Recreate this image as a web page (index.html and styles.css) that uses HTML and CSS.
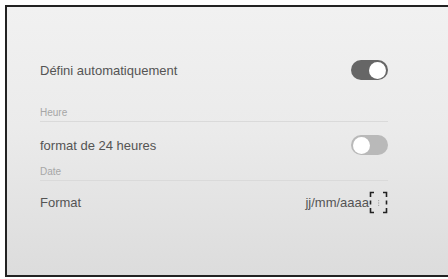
FILE: index.html
```html
<!DOCTYPE html>
<html>
<head>
<meta charset="utf-8">
<link rel="stylesheet" href="styles.css">
</head>
<body>
<div class="panel">
  <div class="content">
    <div class="row row-first">
      <span class="label">Défini automatiquement</span>
      <span class="toggle on"><span class="knob"></span></span>
    </div>
    <div class="section section-heure">Heure</div>
    <div class="row row-24">
      <span class="label">format de 24 heures</span>
      <span class="toggle off"><span class="knob"></span></span>
    </div>
    <div class="section section-date">Date</div>
    <div class="row row-format">
      <span class="label">Format</span>
      <span class="value">jj/mm/aaaa<svg class="icon" width="19" height="23" viewBox="0 0 19 23"><g fill="none" stroke="#222" stroke-width="1.6"><path d="M1.5 6V1.5H5"/><path d="M1.5 9.5V13.5"/><path d="M1.5 17V21.5H5"/><path d="M14 1.5H17.5V6"/><path d="M17.5 9.5V13.5"/><path d="M14 21.5H17.5V17"/></g><g fill="#aaa"><rect x="9" y="9" width="1.2" height="1.2"/><rect x="9" y="11.4" width="1.2" height="1.2"/><rect x="9" y="13.8" width="1.2" height="1.2"/></g></svg></span>
    </div>
  </div>
</div>
</body>
</html>
```
FILE: styles.css
```css
html, body {
  margin: 0;
  padding: 0;
  background: #ffffff;
  overflow: hidden;
  width: 448px;
  height: 279px;
}
.panel {
  margin: 5px 0 0 5px;
  width: 460px;
  height: 268px;
  border: 2px solid #222;
  background: linear-gradient(180deg, #f1f1f1 0%, #ebebeb 45%, #dcdcdc 100%);
  font-family: "Liberation Sans", Arial, sans-serif;
  color: #545454;
  box-sizing: content-box;
}
.content {
  width: 348px;
  margin-left: 33px;
  padding-top: 51px;
}
.row {
  height: 24px;
  display: flex;
  align-items: center;
  justify-content: space-between;
  font-size: 13px;
}
.section {
  height: 16px;
  line-height: 16px;
  font-size: 10px;
  color: #a6a6a6;
  border-bottom: 1px solid #dadada;
}
.section-heure { margin-top: 23px; }
.row-24 { margin-top: 11px; }
.section-date { margin-top: 7px; }
.row-format { margin-top: 9px; }
.toggle {
  width: 37px;
  height: 20px;
  border-radius: 10px;
  display: flex;
  align-items: center;
  padding: 0 2px;
  box-sizing: border-box;
}
.toggle.on {
  background: #666;
  justify-content: flex-end;
}
.toggle.off {
  background: #b9b9b9;
  justify-content: flex-start;
}
.knob {
  width: 17px;
  height: 17px;
  border-radius: 50%;
  background: #fff;
}
.value {
  display: flex;
  align-items: center;
}
.icon {
  display: block;
  margin-left: 0px;
}
```
